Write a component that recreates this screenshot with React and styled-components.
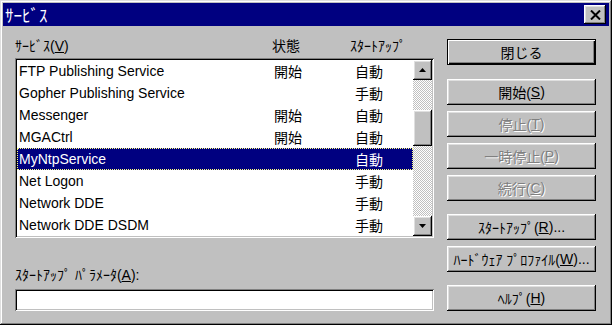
import React from "react";
import styled, { createGlobalStyle, css } from "styled-components";

const Global = createGlobalStyle`
  html, body { margin: 0; padding: 0; background: #c0c0c0; }
  * { box-sizing: border-box; }
`;

const raised = css`
  background: #c0c0c0;
  box-shadow: inset -1px -1px #000, inset 1px 1px #fff, inset -2px -2px #808080, inset 2px 2px #dfdfdf;
`;

const sunken = css`
  box-shadow: inset 1px 1px #808080, inset -1px -1px #fff, inset 2px 2px #000, inset -2px -2px #c0c0c0;
`;

const Window = styled.div`
  width: 612px;
  height: 325px;
  padding: 3px;
  background: #c0c0c0;
  box-shadow: inset -1px -1px #000, inset 1px 1px #dfdfdf, inset -2px -2px #808080, inset 2px 2px #fff;
  display: flex;
  flex-direction: column;
  font-family: "Liberation Sans", "Noto Sans CJK JP", sans-serif;
  font-size: 14px;
  color: #000;
`;

const TitleBar = styled.div`
  height: 23px;
  background: #000080;
  color: #fff;
  display: flex;
  align-items: center;
  justify-content: space-between;
  padding: 0 3px 0 2px;
  font-size: 17px;
`;

const CloseBox = styled.div`
  ${raised};
  width: 22px;
  height: 19px;
  display: flex;
  align-items: center;
  justify-content: center;
`;

const Body = styled.div`
  flex: 1;
  display: flex;
  gap: 13px;
  padding: 12px 13px 0 12px;
`;

const LeftCol = styled.div`
  width: 419px;
  display: flex;
  flex-direction: column;
`;

const HeaderRow = styled.div`
  display: flex;
  height: 16px;
  line-height: 16px;
  margin-bottom: 4px;
  white-space: nowrap;
`;

const HeaderCell = styled.div`
  width: ${(p) => (p.$w ? `${p.$w}px` : "auto")};
  flex: ${(p) => (p.$w ? "none" : 1)};
`;

const ListBox = styled.div`
  ${sunken};
  height: 180px;
  padding: 2px;
  background: #fff;
  display: flex;
`;

const Rows = styled.div`
  flex: 1;
  overflow: hidden;
`;

const Row = styled.div`
  display: grid;
  grid-template-columns: 255px 81px 1fr;
  height: 22px;
  align-items: center;
  padding-left: 2px;
  white-space: nowrap;
  background: ${(p) => (p.$selected ? "#000080" : "#fff")};
  color: ${(p) => (p.$selected ? "#fff" : "#000")};
  outline: ${(p) => (p.$selected ? "1px dotted #ffff80" : "none")};
  outline-offset: -1px;
`;

const ScrollBar = styled.div`
  width: 19px;
  display: flex;
  flex-direction: column;
`;

const ScrollBtn = styled.div`
  ${raised};
  height: 20px;
  display: flex;
  align-items: center;
  justify-content: center;
`;

const Track = styled.div`
  flex: 1;
  background: repeating-conic-gradient(#c0c0c0 0 25%, #fff 0 50%) 0 0 / 2px 2px;
  padding-top: 30px;
`;

const Thumb = styled.div`
  ${raised};
  height: 36px;
`;

const ParamLabel = styled.div`
  margin-top: 29px;
  line-height: 16px;
  margin-bottom: 6px;
  white-space: nowrap;
`;

const TextInput = styled.div`
  ${sunken};
  height: 22px;
  background: #fff;
`;

const RightCol = styled.div`
  width: 149px;
  display: flex;
  flex-direction: column;
`;

const Button = styled.div`
  ${raised};
  height: 26px;
  margin-top: ${(p) => p.$mt || 0}px;
  display: flex;
  align-items: center;
  justify-content: center;
  white-space: nowrap;
  color: ${(p) => (p.$disabled ? "#808080" : "#000")};
  text-shadow: ${(p) => (p.$disabled ? "1px 1px 0 #fff" : "none")};
  ${(p) =>
    p.$default &&
    css`
      box-shadow: inset 1px 1px #000, inset -1px -1px #000, inset 2px 2px #fff, inset -2px -2px #000,
        inset -3px -3px #808080;
    `}
`;

const Arrow = ({ down }) => (
  <svg width="7" height="4" viewBox="0 0 7 4">
    <polygon points={down ? "0,0 7,0 3.5,4" : "0,4 7,4 3.5,0"} fill="#000" />
  </svg>
);

const services = [
  ["FTP Publishing Service", "開始", "自動"],
  ["Gopher Publishing Service", "", "手動"],
  ["Messenger", "開始", "自動"],
  ["MGACtrl", "開始", "自動"],
  ["MyNtpService", "", "自動"],
  ["Net Logon", "", "手動"],
  ["Network DDE", "", "手動"],
  ["Network DDE DSDM", "", "手動"],
];

export default function App() {
  return (
    <>
      <Global />
      <Window>
        <TitleBar>
          <span>ｻｰﾋﾞｽ</span>
          <CloseBox>
            <svg width="11" height="10" viewBox="0 0 11 10">
              <path d="M1 0.5 L10 9.5 M10 0.5 L1 9.5" stroke="#000" strokeWidth="2" />
            </svg>
          </CloseBox>
        </TitleBar>
        <Body>
          <LeftCol>
            <HeaderRow>
              <HeaderCell $w={257}>
                ｻｰﾋﾞｽ(<u>V</u>)
              </HeaderCell>
              <HeaderCell $w={78}>状態</HeaderCell>
              <HeaderCell>ｽﾀｰﾄｱｯﾌﾟ</HeaderCell>
            </HeaderRow>
            <ListBox>
              <Rows>
                {services.map(([name, state, start], i) => (
                  <Row key={name} $selected={i === 4}>
                    <span>{name}</span>
                    <span>{state}</span>
                    <span>{start}</span>
                  </Row>
                ))}
              </Rows>
              <ScrollBar>
                <ScrollBtn>
                  <Arrow />
                </ScrollBtn>
                <Track>
                  <Thumb />
                </Track>
                <ScrollBtn>
                  <Arrow down />
                </ScrollBtn>
              </ScrollBar>
            </ListBox>
            <ParamLabel>
              ｽﾀｰﾄｱｯﾌﾟ ﾊﾟﾗﾒｰﾀ(<u>A</u>):
            </ParamLabel>
            <TextInput />
          </LeftCol>
          <RightCol>
            <Button $default $mt={1}>閉じる</Button>
            <Button $mt={14}>
              開始(<u>S</u>)
            </Button>
            <Button $mt={6} $disabled>
              停止(<u>T</u>)
            </Button>
            <Button $mt={6} $disabled>
              一時停止(<u>P</u>)
            </Button>
            <Button $mt={6} $disabled>
              続行(<u>C</u>)
            </Button>
            <Button $mt={13}>
              ｽﾀｰﾄｱｯﾌﾟ(<u>R</u>)...
            </Button>
            <Button $mt={6}>
              ﾊｰﾄﾞｳｪｱ ﾌﾟﾛﾌｧｲﾙ(<u>W</u>)...
            </Button>
            <Button $mt={13}>
              ﾍﾙﾌﾟ(<u>H</u>)
            </Button>
          </RightCol>
        </Body>
      </Window>
    </>
  );
}
